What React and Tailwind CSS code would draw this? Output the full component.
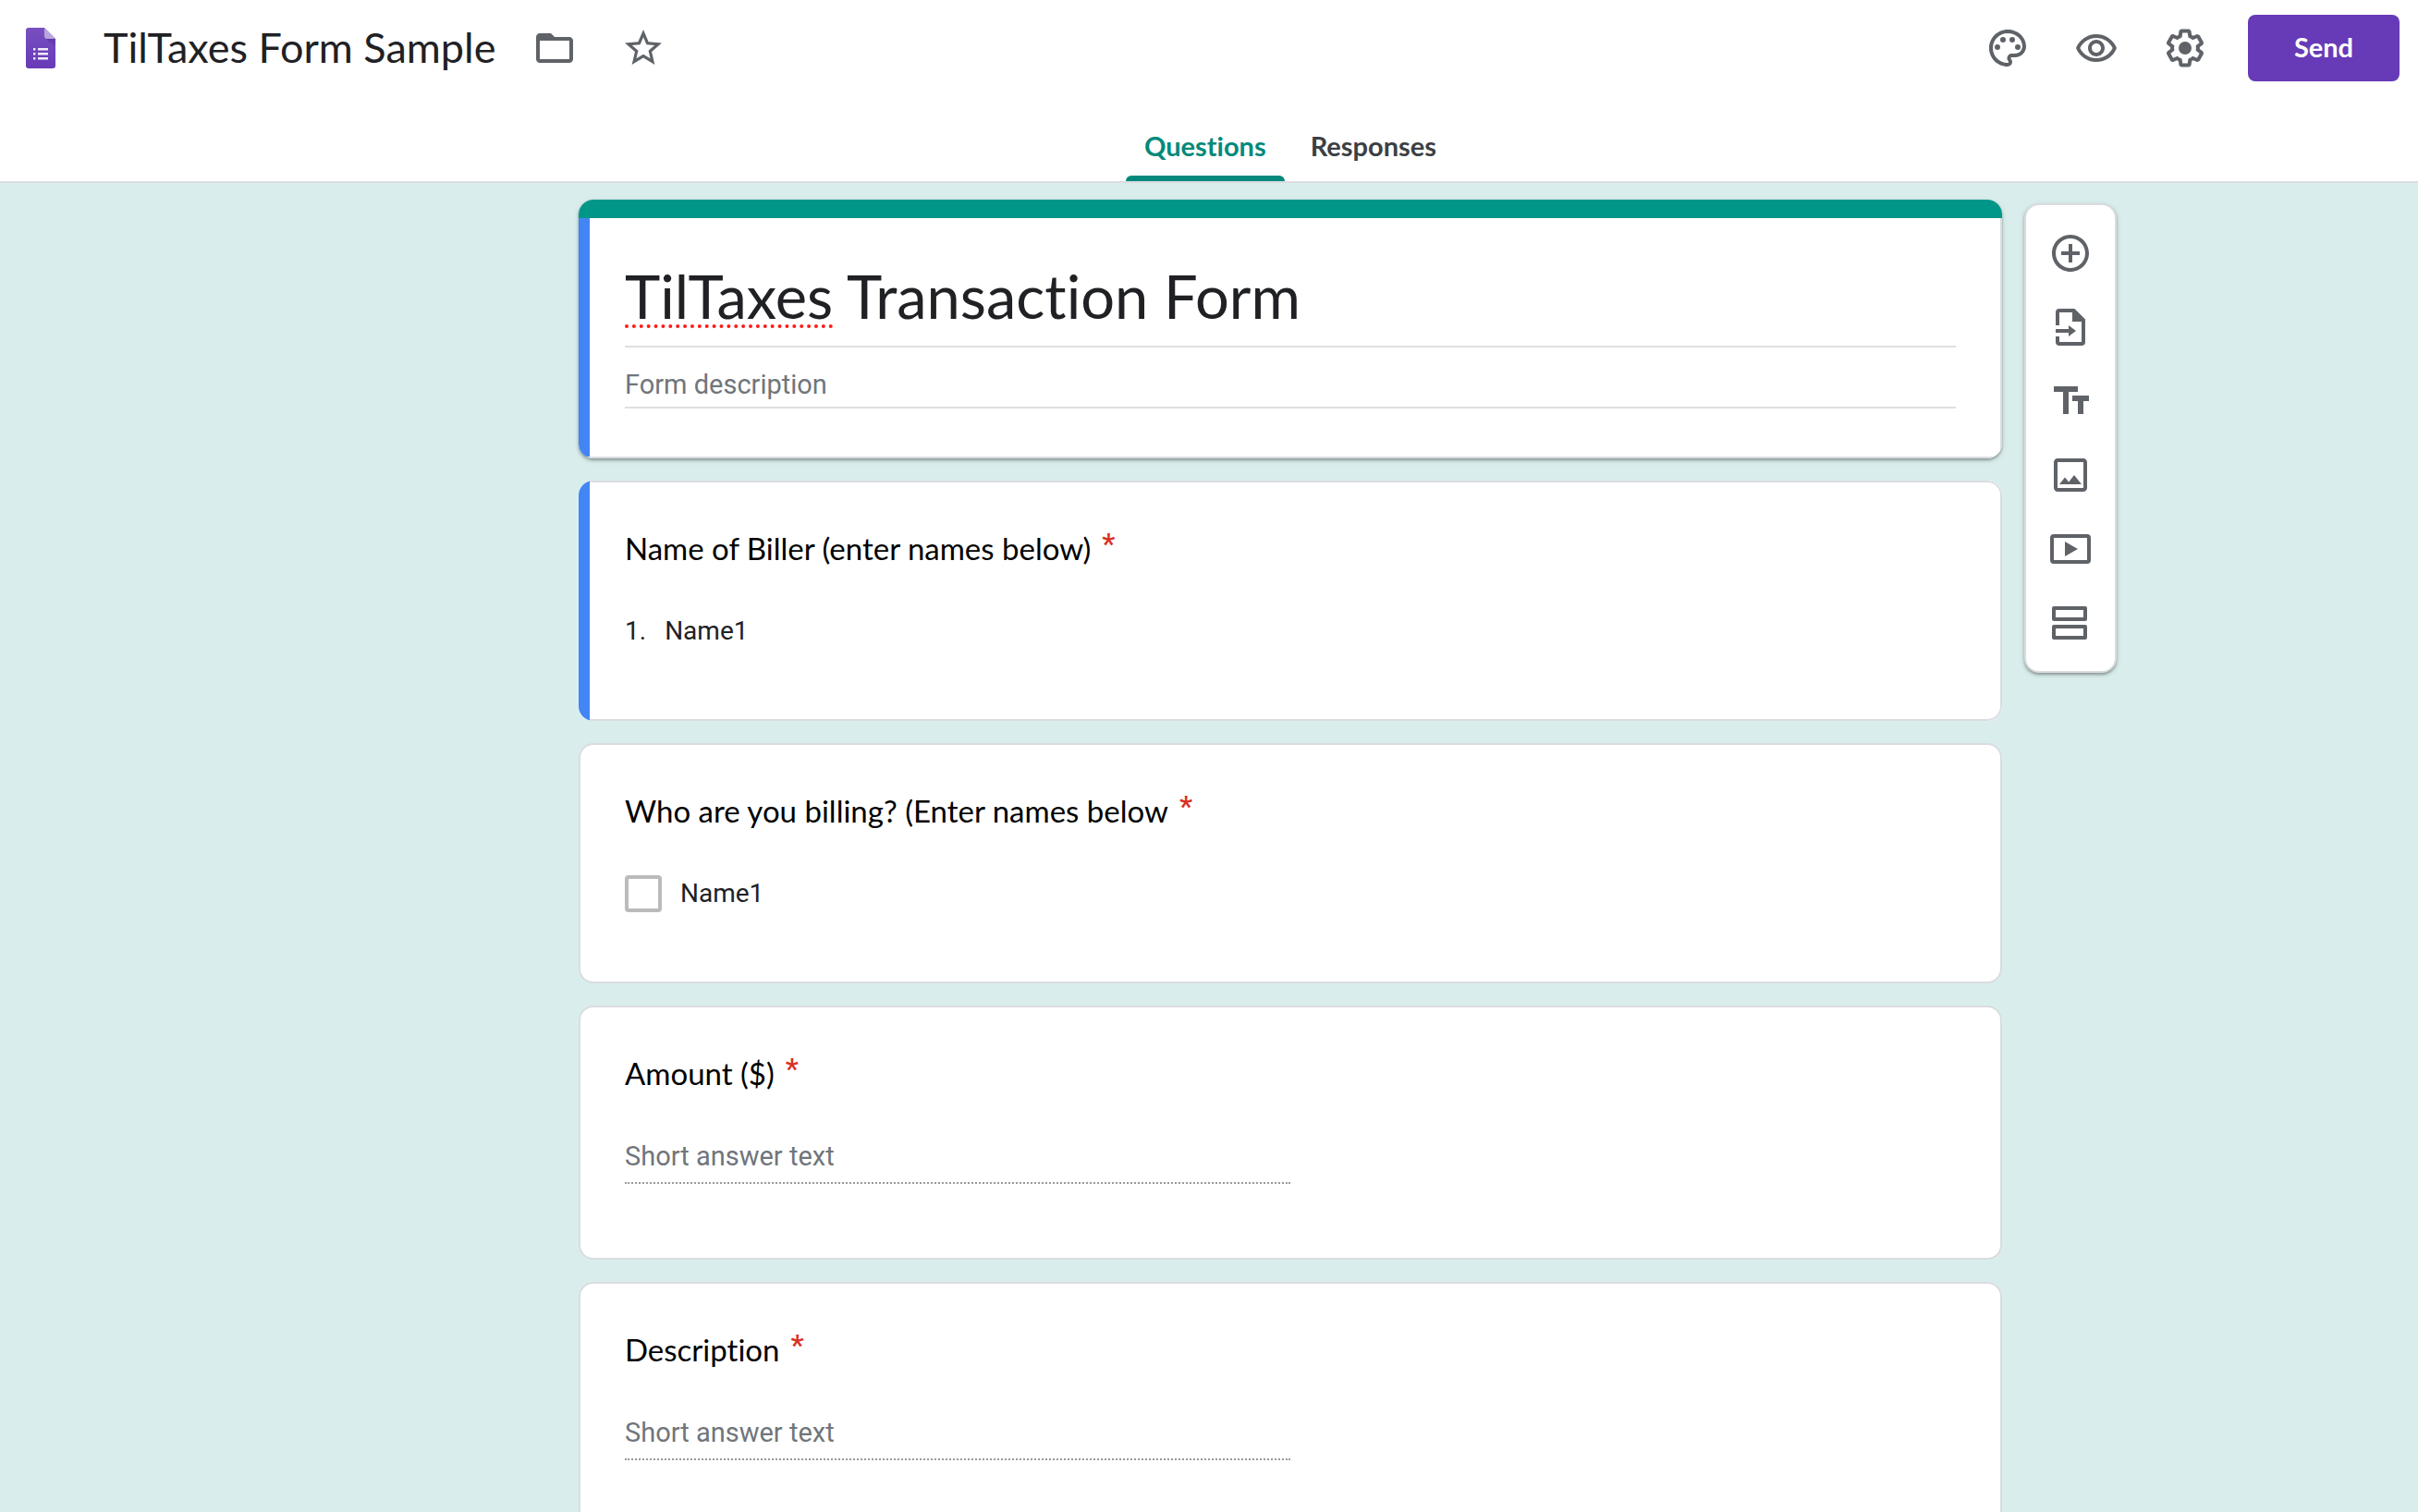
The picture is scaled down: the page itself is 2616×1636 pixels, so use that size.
import { useState } from "react";

function Icon({ children, className = "size-12" }) {
  return (
    <svg viewBox="0 0 24 24" fill="currentColor" aria-hidden="true" className={className}>
      {children}
    </svg>
  );
}

function IconButton({ label, children }) {
  return (
    <button type="button" aria-label={label} className="flex size-20 items-center justify-center rounded-full text-[#5f6368]">
      <Icon>{children}</Icon>
    </button>
  );
}

function FormsLogo() {
  return (
    <svg viewBox="0 0 32 44" className="h-11 w-8" aria-hidden="true">
      <defs>
        <linearGradient id="page" x1="0" y1="0" x2="0" y2="1">
          <stop offset="0" stopColor="#7850c0" />
          <stop offset="1" stopColor="#673ab7" />
        </linearGradient>
        <linearGradient id="fold" x1="0" y1="0" x2="0" y2="1">
          <stop offset="0" stopColor="#5e35a8" />
          <stop offset="1" stopColor="#6f47ba" />
        </linearGradient>
      </defs>
      <path fill="url(#page)" d="M3 0H20L32 12V41a3 3 0 0 1-3 3H3a3 3 0 0 1-3-3V3a3 3 0 0 1 3-3z" />
      <path fill="url(#fold)" d="M21 11L32 22V12z" />
      <path fill="#b9a5dd" d="M20 0L32 12H23a3 3 0 0 1-3-3z" />
      <path fill="#f1ecf9" d="M13 22h11v2.5H13zM13 27h11v2.5H13zM13 32h11v2.5H13zM8 22h2.4v2.5H8zM8 27h2.4v2.5H8zM8 32h2.4v2.5H8z" />
    </svg>
  );
}

const font = {
  display: "font-['Lato','Liberation_Sans',sans-serif] [font-variant-ligatures:none]",
  body: "font-['Roboto','Liberation_Sans',sans-serif]",
};

function Header() {
  const [name, setName] = useState("TilTaxes Form Sample");
  return (
    <header className="border-b-2 border-[#dadce0] bg-white">
      <div className="flex h-26 items-center justify-between pr-5 pl-7">
        <div className="flex items-center">
          <a href="#home" aria-label="Forms home" className="mr-13">
            <FormsLogo />
          </a>
          <input
            aria-label="Document title"
            value={name}
            onChange={(e) => setName(e.target.value)}
            className={`field-sizing-content mr-6 h-14 text-[45px] text-[#202124] outline-none ${font.display}`}
          />
          <div className="flex gap-4">
            <IconButton label="Move to folder">
              <path d="M9.17 6l2 2H20v10H4V6h5.17M10 4H4c-1.1 0-1.99.9-1.99 2L2 18c0 1.1.9 2 2 2h16c1.1 0 2-.9 2-2V8c0-1.1-.9-2-2-2h-8l-2-2z" />
              <path d="M3 5h7l2 3H3z" />
            </IconButton>
            <IconButton label="Star">
              <path d="M22 9.24l-7.19-.62L12 2 9.19 8.63 2 9.24l5.46 4.73L5.82 21 12 17.27 18.18 21l-1.63-7.03L22 9.24zM12 15.4l-3.76 2.27 1-4.28-3.32-2.88 4.38-.38L12 6.1l1.71 4.04 4.38.38-3.32 2.88 1 4.28L12 15.4z" />
            </IconButton>
          </div>
        </div>
        <div className="flex items-center gap-4">
          <IconButton label="Customize theme">
            <path d="M12 22C6.49 22 2 17.51 2 12S6.49 2 12 2s10 4.04 10 9c0 3.31-2.69 6-6 6h-1.77c-.28 0-.5.22-.5.5 0 .12.05.23.13.33.41.47.64 1.06.64 1.67A2.5 2.5 0 0 1 12 22zm0-18c-4.41 0-8 3.59-8 8s3.59 8 8 8c.28 0 .5-.22.5-.5a.54.54 0 0 0-.14-.35c-.41-.46-.63-1.05-.63-1.65a2.5 2.5 0 0 1 2.5-2.5H16c2.21 0 4-1.79 4-4 0-3.86-3.59-7-8-7z" />
            <circle cx="6.5" cy="11.5" r="1.5" />
            <circle cx="9.5" cy="7.5" r="1.5" />
            <circle cx="14.5" cy="7.5" r="1.5" />
            <circle cx="17.5" cy="11.5" r="1.5" />
          </IconButton>
          <IconButton label="Preview">
            <path d="M12 6.5c3.79 0 7.17 2.13 8.82 5.5-1.65 3.37-5.02 5.5-8.82 5.5S4.83 15.37 3.18 12C4.83 8.63 8.21 6.5 12 6.5m0-2C7 4.5 2.73 7.61 1 12c1.73 4.39 6 7.5 11 7.5s9.27-3.11 11-7.5c-1.73-4.39-6-7.5-11-7.5zm0 5c1.38 0 2.5 1.12 2.5 2.5s-1.12 2.5-2.5 2.5-2.5-1.12-2.5-2.5 1.12-2.5 2.5-2.5m0-2c-2.48 0-4.5 2.02-4.5 4.5s2.02 4.5 4.5 4.5 4.5-2.02 4.5-4.5-2.02-4.5-4.5-4.5z" />
          </IconButton>
          <IconButton label="Settings">
            <path d="M13.85 22.25h-3.7c-.74 0-1.36-.54-1.45-1.27l-.27-1.89c-.27-.14-.53-.29-.79-.46l-1.8.72c-.7.26-1.47-.03-1.81-.65L2.2 15.53c-.35-.66-.2-1.44.36-1.88l1.53-1.19c-.01-.15-.02-.3-.02-.46 0-.15.01-.31.02-.46l-1.52-1.19c-.59-.45-.74-1.26-.37-1.88l1.85-3.19c.34-.62 1.11-.9 1.79-.63l1.81.73c.26-.17.52-.32.78-.46l.27-1.91c.09-.7.71-1.25 1.44-1.25h3.7c.74 0 1.36.54 1.45 1.27l.27 1.89c.27.14.53.29.79.46l1.8-.72c.71-.26 1.48.03 1.82.65l1.84 3.18c.36.66.2 1.44-.36 1.88l-1.52 1.19c.01.15.02.3.02.46s-.01.31-.02.46l1.52 1.19c.56.45.72 1.23.37 1.86l-1.86 3.22c-.34.62-1.11.9-1.8.63l-1.8-.72c-.26.17-.52.32-.78.46l-.27 1.91c-.1.68-.72 1.22-1.46 1.22zm-3.23-2h2.76l.37-2.55.53-.22c.44-.18.88-.44 1.34-.78l.45-.34 2.38.96 1.38-2.4-2.03-1.58.07-.56c.03-.26.06-.51.06-.78s-.03-.53-.06-.78l-.07-.56 2.03-1.58-1.39-2.4-2.39.96-.45-.35c-.42-.32-.87-.58-1.33-.77l-.52-.22-.37-2.55h-2.76l-.37 2.55-.53.21c-.44.19-.88.44-1.34.79l-.45.33-2.38-.95-1.39 2.39 2.03 1.58-.07.56a7 7 0 0 0-.06.79c0 .26.02.53.06.78l.07.56-2.03 1.58 1.38 2.4 2.39-.96.45.35c.43.33.86.58 1.33.77l.53.22.38 2.55z" />
            <circle cx="12" cy="12" r="3.5" />
          </IconButton>
          <button type="button" className={`ml-3 h-18 w-41 rounded-lg bg-[#673ab7] pb-[2px] text-[29px] font-bold text-white ${font.display}`}>
            Send
          </button>
        </div>
      </div>
      <Tabs />
    </header>
  );
}

function Tabs() {
  const [active, setActive] = useState("Questions");
  return (
    <div role="tablist" className={`flex h-23 items-stretch justify-center gap-2 pl-44 text-[29px] font-bold ${font.display}`}>
      {["Questions", "Responses"].map((tab) => (
        <button
          key={tab}
          type="button"
          role="tab"
          aria-selected={active === tab}
          onClick={() => setActive(tab)}
          className="group flex flex-col items-stretch text-[#3c4043] aria-selected:text-[#00897b]"
        >
          <span className="flex flex-1 items-center px-5 pt-[22px]">{tab}</span>
          <span className="h-[6px] rounded-t-md group-aria-selected:bg-[#00897b]" />
        </button>
      ))}
    </div>
  );
}

function TitleCard() {
  return (
    <section className="flex flex-col overflow-hidden rounded-2xl bg-white shadow-[0_2px_3px_rgba(0,0,0,0.3),0_2px_6px_rgba(0,0,0,0.12)]">
      <div className="h-5 bg-[#009688]" />
      <div className="flex border-r-2 border-b-2 border-[#dadce0]">
        <div className="w-3 bg-[#4285f4]" />
        <div className="flex-1 pr-12 pb-13 pl-[38px]">
          <h1
            contentEditable
            suppressContentEditableWarning
            spellCheck={false}
            className={`border-b-2 border-[#dfdfdf] pt-11 pb-[14px] text-[65px] leading-20 text-[#202124] outline-none ${font.display}`}
          >
            <span className="underline decoration-[#ff1a1a] decoration-dotted decoration-4 underline-offset-[6px] [text-decoration-skip-ink:none]">TilTaxes</span> Transaction Form
          </h1>
          <input
            aria-label="Form description"
            placeholder="Form description"
            className={`block h-[66px] w-full border-b-2 border-[#dfdfdf] pt-4 text-[29px] text-[#202124] outline-none placeholder:text-[#70757a] ${font.body}`}
          />
        </div>
      </div>
    </section>
  );
}

function QuestionCard({ title, selected, tall, children }) {
  return (
    <section
      className={
        selected
          ? "flex overflow-hidden rounded-2xl bg-white"
          : "flex rounded-2xl border-2 border-[#dadce0] bg-white"
      }
    >
      {selected && <div className="w-3 bg-[#4285f4]" />}
      <div
        className={
          selected
            ? "flex-1 rounded-r-2xl border-2 border-l-0 border-[#dadce0] pt-12 pr-12 pb-[75px] pl-[38px]"
            : tall
              ? "flex-1 px-12 pt-12 pb-20"
              : "flex-1 px-12 pt-12 pb-[75px]"
        }
      >
        <h2 className={`flex h-12 items-center gap-3 text-[33px] text-black ${font.display}`}>
          {title}
          <span className={`flex h-full items-start text-[32px] leading-9 font-medium text-[#d93025] ${font.body}`}>*</span>
        </h2>
        <div className={`mt-[45px] text-[28px] leading-10 text-[#202124] ${font.body}`}>{children}</div>
      </div>
    </section>
  );
}

function ShortAnswer({ label }) {
  return (
    <input
      aria-label={label}
      placeholder="Short answer text"
      className="block h-[50px] w-1/2 border-b-2 border-dotted border-[#9a9a9a] pb-2 text-[29px] outline-none placeholder:text-[#70757a]"
    />
  );
}

const tools = [
  ["Add question", "M13 7h-2v4H7v2h4v4h2v-4h4v-2h-4V7zm-1-5C6.48 2 2 6.48 2 12s4.48 10 10 10 10-4.48 10-10S17.52 2 12 2zm0 18c-4.41 0-8-3.59-8-8s3.59-8 8-8 8 3.59 8 8-3.59 8-8 8z"],
  ["Import questions", "M6 2H14.2L20 7.8V20a2 2 0 0 1-2 2H6a2 2 0 0 1-2-2V17h2v3h12V9h-5V4H6v7H4V4a2 2 0 0 1 2-2zM4 13h7v-2l4 3-4 3v-2H4z"],
  ["Add title and description", "M3 4v3h5v12h3V7h5V4zM22 9h-9v3h3v7h3v-7h3z"],
  ["Add image", "M19 5v14H5V5h14m0-2H5c-1.1 0-2 .9-2 2v14c0 1.1.9 2 2 2h14c1.1 0 2-.9 2-2V5c0-1.1-.9-2-2-2zM14 12l-2.9 3.8L9 13.2 6 17h12z"],
  ["Add video", "M21 4H3a2 2 0 0 0-2 2v12a2 2 0 0 0 2 2h18a2 2 0 0 0 2-2V6a2 2 0 0 0-2-2zm0 14H3V6h18zM9 8v8l7-4z"],
  ["Add section", "M20 3H3a1 1 0 0 0-1 1v6a1 1 0 0 0 1 1h17a1 1 0 0 0 1-1V4a1 1 0 0 0-1-1zm-1 6H4V5h15zM20 13H3a1 1 0 0 0-1 1v6a1 1 0 0 0 1 1h17a1 1 0 0 0 1-1v-6a1 1 0 0 0-1-1zm-1 6H4v-4h15z"],
];

function Toolbar() {
  return (
    <aside aria-label="Add items" className="mt-1 ml-6 flex w-25 flex-col items-center self-start rounded-2xl border-2 border-[#dadce0] bg-white py-3 shadow-[0_2px_3px_rgba(0,0,0,0.3),0_2px_6px_rgba(0,0,0,0.12)]">
      {tools.map(([label, d]) => (
        <IconButton key={label} label={label}>
          <path fillRule="evenodd" d={d} />
        </IconButton>
      ))}
    </aside>
  );
}

export default function App() {
  return (
    <div className="flex min-h-screen flex-col bg-[#d9eeec]">
      <Header />
      <main className="grid flex-1 grid-cols-[1fr_minmax(0,1540px)_1fr] py-[18px] pl-44">
        <div className="col-start-2 flex flex-col gap-6">
          <TitleCard />
          <QuestionCard title="Name of Biller (enter names below)" selected>
            <ol className="flex flex-col">
              <li className="flex gap-5">
                <span>1.</span>
                <span>Name1</span>
              </li>
            </ol>
          </QuestionCard>
          <QuestionCard title="Who are you billing? (Enter names below">
            <label className="flex items-center gap-5">
              <input type="checkbox" className="size-10 appearance-none rounded border-4 border-[#bbbbbb] bg-white checked:bg-[#009688]" />
              Name1
            </label>
          </QuestionCard>
          <QuestionCard title="Amount ($)" tall>
            <ShortAnswer label="Amount ($)" />
          </QuestionCard>
          <QuestionCard title="Description" tall>
            <ShortAnswer label="Description" />
          </QuestionCard>
        </div>
        <Toolbar />
      </main>
    </div>
  );
}
